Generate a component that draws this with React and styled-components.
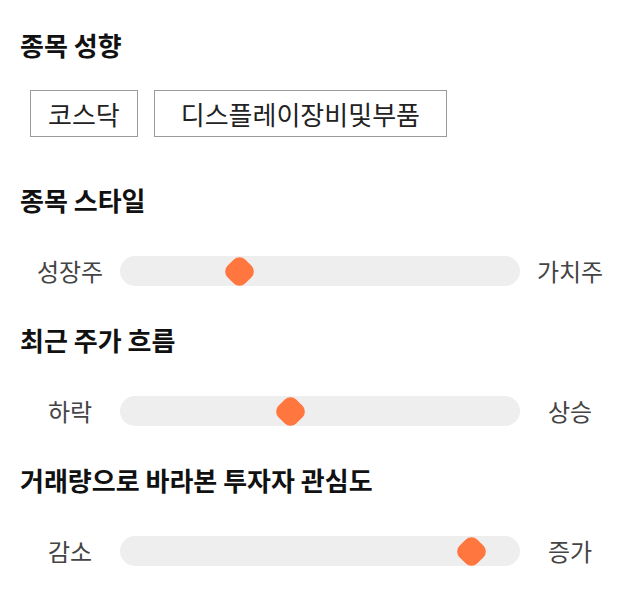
import React from "react";
import styled, { createGlobalStyle } from "styled-components";

const Global = createGlobalStyle`
  html, body { margin: 0; padding: 0; background: #ffffff; }
  body { font-family: "Noto Sans CJK KR", "Noto Sans", sans-serif; }
  * { box-sizing: border-box; }
`;

const Page = styled.div`
  width: 640px;
  padding: 27px 20px 0 20px;
  display: flex;
  flex-direction: column;
`;

const Section = styled.section`
  display: flex;
  flex-direction: column;
  margin-bottom: ${(p) => p.$gap}px;
`;

const Heading = styled.h2`
  margin: 0 0 ${(p) => p.$gap}px 0;
  font-size: 26px;
  line-height: 36px;
  font-weight: 700;
  color: #111111;
`;

const ChipRow = styled.div`
  display: flex;
  gap: 16px;
  padding-left: 10px;
`;

const Chip = styled.div`
  height: 47px;
  padding: 0 ${(p) => p.$pad}px;
  border: 1px solid #9a9a9a;
  display: flex;
  align-items: center;
  justify-content: center;
  font-size: 26px;
  color: #222222;
`;

const SliderRow = styled.div`
  display: grid;
  grid-template-columns: 100px 400px 100px;
  align-items: center;
  height: 30px;
`;

const SideLabel = styled.span`
  text-align: center;
  font-size: 24px;
  line-height: 30px;
  color: #444444;
`;

const Track = styled.div`
  position: relative;
  height: 30px;
  border-radius: 15px;
  background: #eeeeee;
`;

const Thumb = styled.div`
  position: absolute;
  top: 50%;
  left: ${(p) => p.$pos}px;
  width: 25px;
  height: 25px;
  margin: -12.5px 0 0 -12.5px;
  border-radius: 8px;
  background: #ff763e;
  transform: rotate(45deg);
`;

const sliders = [
  { title: "종목 스타일", left: "성장주", right: "가치주", pos: 119.5 },
  { title: "최근 주가 흐름", left: "하락", right: "상승", pos: 170 },
  { title: "거래량으로 바라본 투자자 관심도", left: "감소", right: "증가", pos: 351 },
];

function Slider({ left, right, pos }) {
  return (
    <SliderRow>
      <SideLabel>{left}</SideLabel>
      <Track>
        <Thumb $pos={pos} />
      </Track>
      <SideLabel>{right}</SideLabel>
    </SliderRow>
  );
}

export default function App() {
  return (
    <>
      <Global />
      <Page>
        <Section $gap={45}>
          <Heading $gap={27}>종목 성향</Heading>
          <ChipRow>
            <Chip $pad={17}>코스닥</Chip>
            <Chip $pad={26}>디스플레이장비및부품</Chip>
          </ChipRow>
        </Section>
        {sliders.map((s) => (
          <Section key={s.title} $gap={36}>
            <Heading $gap={38}>{s.title}</Heading>
            <Slider left={s.left} right={s.right} pos={s.pos} />
          </Section>
        ))}
      </Page>
    </>
  );
}
